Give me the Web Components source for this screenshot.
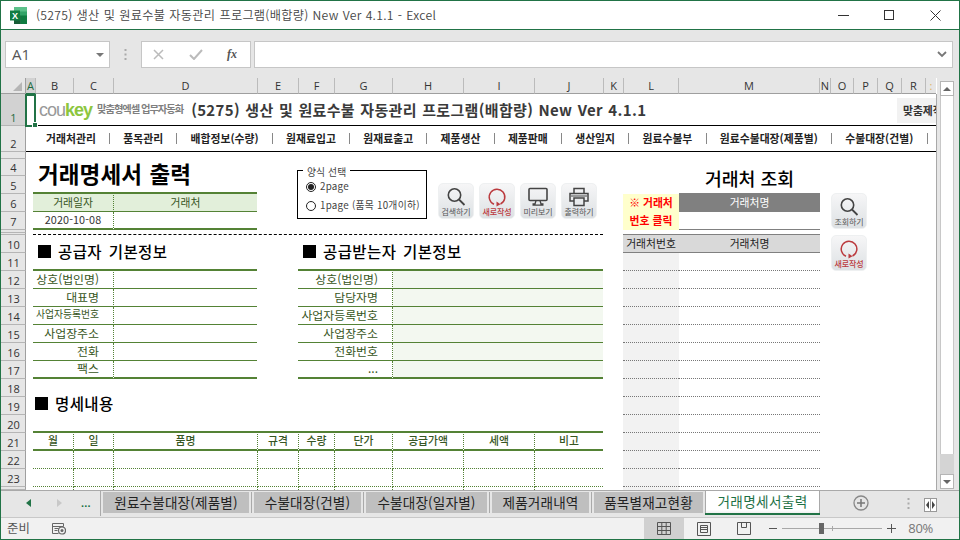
<!DOCTYPE html>
<html lang="ko"><head><meta charset="utf-8"><title>Excel</title>
<style>
html,body{margin:0;padding:0;width:960px;height:540px;overflow:hidden;background:#e6e6e6}
body{font-family:"Noto Sans CJK KR","Noto Sans",sans-serif;}
</style></head><body>
<x-app></x-app>
<script>
const K='"Noto Sans CJK KR",sans-serif';
const def=(n,css,html,init)=>customElements.define(n,class extends HTMLElement{
  connectedCallback(){ if(this.shadowRoot)return; const r=this.attachShadow({mode:'open'});
    r.innerHTML='<style>'+css+'</style>'+(typeof html==='function'?html(this):html); if(init)init(this,r);} });

const ICON={
 search:'<svg viewBox="0 0 24 20" width="24" height="20"><circle cx="10.5" cy="8" r="6.200" fill="none" stroke="#444" stroke-width="1.6"/><path d="M15 12.5 20.500 18" stroke="#444" stroke-width="1.8"/></svg>',
 refresh:'<svg viewBox="0 0 24 20" width="24" height="20"><path d="M9 17.2A7.8 7.8 0 1 1 15.5 17" fill="none" stroke="#bb3b3f" stroke-width="1.5"/><path d="M11.5 14.5 15.5 17.2 11.5 19.5z" fill="#bb3b3f"/></svg>',
 view:'<svg viewBox="0 0 24 20" width="24" height="20"><rect x="3" y="1.5" width="18" height="12" rx="1" fill="none" stroke="#444" stroke-width="1.6"/><path d="M10 13.5 9 17H6.500M14 13.500 15 17h2.500M6.500 18.200h11" fill="none" stroke="#444" stroke-width="1.300"/></svg>',
 print:'<svg viewBox="0 0 24 20" width="24" height="20"><path d="M7 6V1.500h10V6M6.500 14H3V6.500h18V14h-3.500M7 11h10v7.500H7z" fill="none" stroke="#444" stroke-width="1.500"/><path d="M4 9h16" stroke="#444" stroke-width="1"/></svg>'
};
def('x-sheet-btn',`:host{display:flex;flex-direction:column;align-items:center;width:36px;height:36px;box-sizing:border-box;padding-top:3px;border-radius:5px;border:1px solid #eef0f1;background:linear-gradient(#f6f6f7,#dde1e4);font:8px/9px ${K};color:#555;overflow:hidden}
 :host([red]){color:#bb3b3f;font-weight:500} svg{display:block;flex:none;margin-bottom:0} span{white-space:nowrap;letter-spacing:-.1px}`,
 h=>ICON[h.getAttribute('icon')]+`<span>${h.getAttribute('label')}</span>`);

def('x-title-bar',`:host{display:flex;align-items:center;height:30px;box-sizing:border-box;background:#fff;border-top:1px solid #217346;border-bottom:1px solid #217346;padding-left:9px;font:12.200px/1 ${K};color:#444}
 .t{margin-left:9px;flex:1;font-weight:350;white-space:nowrap;word-spacing:.4px;letter-spacing:.28px}
 .w{display:flex;height:100%;padding-right:1px} .w b{display:flex;width:46px;align-items:center;justify-content:center}`,
 `<svg width="17" height="17" viewBox="0 0 17 17"><path d="M4 0h13v17H4z" fill="#33a468"/><path d="M4 0h13v4.500H4z" fill="#5cc18a"/><path d="M10.500 8.500H17v8.500h-6.500z" fill="#107c41"/><path d="M4 8.500h6.500V17H4z" fill="#185c37"/><rect y="3.500" width="10" height="10" fill="#107c41"/><text x="5" y="11.800" text-anchor="middle" font-size="9" font-weight="700" fill="#fff" font-family="Liberation Sans">X</text></svg>
 <div class="t">(5275) 생산 및 원료수불 자동관리 프로그램(배합량) New Ver 4.1.1 - Excel</div>
 <div class="w"><b><svg width="11" height="11"><path d="M0 5.500h11" stroke="#333"/></svg></b><b><svg width="11" height="11"><rect x=".5" y=".5" width="9" height="9" fill="none" stroke="#333"/></svg></b><b><svg width="11" height="11"><path d="M.5.500l10 10M10.500.500l-10 10" stroke="#333"/></svg></b></div>`);

def('x-formula-bar',`:host{display:flex;align-items:center;height:48px;box-sizing:border-box;padding:11px 6px 10px 4px;background:#e6e6e6;font:14px/1 "Open Sans",sans-serif}
 .box{background:#fff;border:1px solid #c6c6c6;height:27px;box-sizing:border-box;display:flex;align-items:center;position:relative}
 .nm{width:105px;padding-left:6px;color:#555;font-size:15px;justify-content:space-between;padding-right:5px;box-sizing:border-box}
 .car{width:0;height:0;border:4px solid transparent;border-top:4px solid #777;border-bottom:0}
 .dots{width:31px;display:flex;justify-content:center}
 .fx{width:110px;padding:0 0 0 11px;color:#aaa;box-sizing:border-box}
 .in{flex:1;margin-left:3px;justify-content:flex-end;padding-right:5px}
 i{font:italic 700 12px "Liberation Serif",serif;color:#555;margin-left:24px}
 .ok{margin-left:25px}`,
 `<div class="box nm">A1<span class="car"></span></div><div class="dots"><svg width="3" height="13"><path d="M1.500 1v11" stroke="#aaa" stroke-width="2" stroke-dasharray="2 2.500"/></svg></div>
 <div class="box fx"><svg width="11" height="11"><path d="M1 1l9 9M10 1l-9 9" stroke="#bbb" stroke-width="1.500"/></svg><svg class="ok" width="14" height="11"><path d="M1 6l4 4 8-9" stroke="#bbb" stroke-width="2" fill="none"/></svg><i>fx</i></div>
 <div class="box in"><svg width="10" height="7"><path d="M1 1l4 4 4-4" stroke="#777" stroke-width="1.800" fill="none"/></svg></div>`);

def('x-menu-bar',`:host{display:flex;align-items:center;height:100%;box-sizing:border-box;padding-left:20px;font:700 10.800px/1 ${K};color:#222;letter-spacing:.05px;white-space:nowrap;overflow:hidden}
 span{flex:none} i{flex:none;width:1px;height:11px;background:#888;margin:0 13.180px}`,
 h=>['거래처관리','품목관리','배합정보(수량)','원재료입고','원재료출고','제품생산','제품판매','생산일지','원료수불부','원료수불대장(제품별)','수불대장(건별)'].map(t=>`<span>${t}</span><i></i>`).join(''));

def('x-logo',`:host{display:flex;align-items:center;padding-left:13px;white-space:nowrap;height:100%;box-sizing:border-box;color:#333}
 .c{font:400 18px/1 "Liberation Sans",sans-serif;letter-spacing:-1px;color:#999}.c b{color:#8dc63f}
 .s{font:700 10.300px/1 ${K};color:#7f7f7f;margin-left:5px;letter-spacing:-1.050px;}
 .t{font:700 15px/1 ${K};margin-left:8px;letter-spacing:.34px;word-spacing:.8px;color:#3a3a3a}`,
 `<span class="c">cou<b>key</b></span><span class="s">맞춤형엑셀 업무자동화</span><span class="t">(5275) 생산 및 원료수불 자동관리 프로그램(배합량) New Ver 4.1.1</span>`);

def('x-section',`:host{display:flex;align-items:center;height:100%;font:500 15.500px/1 ${K};color:#000;white-space:nowrap;letter-spacing:.4px;word-spacing:2px}
 b{display:block;width:13px;height:13px;background:#000;margin-right:7px;flex:none}`,
 `<b></b><slot></slot>`);

def('x-form-box',`:host{display:block;border:1px solid #000;box-sizing:border-box;height:49px;margin-top:11px;position:relative;font:9.800px/1 ${K};color:#444;white-space:nowrap;padding:9px 0 0 8px;background:#fff}
 .lg{position:absolute;left:5px;top:-3px;background:#fff;padding:0 4px;line-height:9px;letter-spacing:.1px}
 .r{display:flex;align-items:center;height:10px;margin-top:2px;margin-bottom:9px;letter-spacing:.25px} 
 .o{width:10px;height:10px;border:1px solid #222;border-radius:50%;box-sizing:border-box;margin-right:4px;flex:none;display:flex;align-items:center;justify-content:center;background:#fff}
 .o.c::after{content:"";width:6px;height:6px;border-radius:50%;background:#222}`,
 `<span class="lg">양식 선택</span><div class="r"><span class="o c"></span>2page</div><div class="r"><span class="o"></span>1page (품목 10개이하)</div>`);

const COLS=[25,10,38,40,144,41,36,58,71,71,69,20,55,141,11,23,24,24,24,10];
const HDRS=['A','B','C','D','E','F','G','H','I','J','K','L','M','N','O','P','Q','R',':'];
const RH=[32,26,7,17,18,18,18,3,2,18,18,18,18,18,18,18,18,18,18,18,18,18,18,3];
const G='#548235';
def('x-sheet',`
 :host{display:block;position:relative;width:936px;height:412px;background:#fff;overflow:hidden;box-sizing:content-box}
 .g{display:grid;grid-template-columns:${COLS.map(c=>c+'px').join(' ')};grid-template-rows:16px ${RH.map(r=>r+'px').join(' ')};font:10.800px/1 ${K};color:#333;white-space:nowrap;width:936px;height:412px}
 .ch{background:#e6e6e6;border-bottom:1px solid #9f9f9f;border-right:1px solid #bbb;box-sizing:border-box;display:flex;align-items:flex-end;justify-content:center;font:11px/14px "Open Sans",sans-serif;color:#333;overflow:hidden}
 .ch.s{background:#d2d2d2;color:#1e6b41;border-bottom:1px solid #217346}
 .corner{background:#e6e6e6;border-bottom:1px solid #9f9f9f;border-right:1px solid #9f9f9f;box-sizing:border-box;position:relative}
 .corner::after{content:"";position:absolute;right:3px;bottom:2px;border:0 solid transparent;border-width:0 0 9px 9px;border-bottom-color:#b5b5b5}
 .rh{background:#e6e6e6;border-bottom:1px solid #b5b5b5;border-right:1px solid #9f9f9f;box-sizing:border-box;display:flex;align-items:flex-end;justify-content:center;font:11px/15px "Open Sans",sans-serif;color:#333;overflow:hidden;padding-left:1px}
 .rh.s{background:#d2d2d2;color:#1e6b41;border-right:1px solid #217346}
 .c{box-sizing:border-box;display:flex;align-items:center;justify-content:center;min-width:0;min-height:0;padding-bottom:1px}
 .lb{justify-content:flex-end;padding-right:14px;padding-bottom:2px;color:#375623;font-size:11.900px}
 .tiny{font-size:9.800px}
 .h{color:#375623;background:#e2efda} .hh{color:#375623;font-weight:500}
 .dr{border-right:1px dotted ${G}}
 .tl{border-top:2px solid ${G};margin-top:-2px} .bt{border-bottom:1px solid ${G}} .bT{border-bottom:2px solid ${G}} .bd{border-bottom:1px dotted ${G}}
 .ml3{margin-left:-3px}.ml1{margin-left:-1px}.mr1{margin-right:1px}
 .sel{position:absolute;left:24px;top:16px;width:11px;height:33px;box-sizing:border-box;border:2px solid #217346;pointer-events:none}
 .sel::after{content:"";position:absolute;right:-4px;bottom:-3px;width:4px;height:4px;background:#217346;border:1px solid #fff}
 .dash{border-bottom:1px dashed #000;align-self:end;height:0}
 .mk{display:flex;align-items:center;justify-content:center;background:#f2f2f2;font:700 10.800px/1 ${K};color:#333;height:25px;overflow:hidden;align-self:center}
 .rt{font:500 18.300px/1 ${K};color:#000;padding-top:3px;padding-bottom:0}
 .big{font:700 22.500px/1 ${K};color:#000;justify-content:flex-start;padding-left:2px;letter-spacing:.1px;word-spacing:1px}
 .y{background:#ffc;color:#f00;font-weight:700}
 .gy{background:#808080;color:#fff;margin-top:-1px}
 .sb{background:#d9d9d9;color:#222;border-top:1px solid #808080;border-bottom:1px solid #808080;margin-top:-1px}
 .gd{border-bottom:1px dotted #777}
 .l{background:#f2f2f2}
 .tint{background:#f3f8f0}
 .wrap{display:flex;flex-direction:column;gap:6px}
 .edge{position:absolute;right:0;top:16px;bottom:0;width:1px;background:#a9a9a9}
`,h=>{
 let o='';
 const cell=(r,c,re,ce,cl,t='',st='')=>{o+=`<div class="${cl}" style="grid-area:${r+1}/${c+1}/${re+1}/${ce+1};${st}">${t}</div>`;};
 o+=`<div class="corner" style="grid-area:1/1"></div>`;
 HDRS.forEach((t,i)=>o+=`<div class="ch ${i==0?'s':''}" style="grid-area:1/${i+2};${i==18?'color:#e0b060;border-right:0':''}">${t}</div>`);
 RH.forEach((_,i)=>{o+=`<div class="rh ${i==0?'s':''}" style="grid-area:${i+2}/1">${[2,7,8,23].includes(i)?'':i+1}</div>`});
 const C={A:1,B:2,C:3,D:4,E:5,F:6,G:7,H:8,I:9,J:10,K:11,L:12,M:13,N:14,T:19};
 const rc=(r1,c1,r2,c2,cl,t,st)=>cell(r1,C[c1],r2+1,C[c2]+1,cl,t,st);
 rc(1,'B',1,'T','',`<x-logo></x-logo>`,'border-bottom:1px solid #000;box-sizing:border-box;display:block;margin-left:-10px');
 rc(2,'A',2,'T','',`<x-menu-bar></x-menu-bar>`,'border-bottom:1px solid #000;box-sizing:border-box;display:block');
 rc(4,'B',5,'D','c big','거래명세서 출력','height:27px;margin-top:1px');
 rc(6,'B',6,'C','c h tl bt dr ml3','거래일자');rc(6,'D',6,'D','c h tl bt mr1','거래처');
 rc(7,'B',7,'C','c bT dr ml3','2020-10-08','letter-spacing:.1px');rc(7,'D',7,'D','c bT mr1');
 rc(8,'B',9,'J','dash ml3 mr1','','');
 rc(10,'B',11,'D','',`<x-section>공급자 기본정보</x-section>`,'margin-left:2px;padding-bottom:3px;box-sizing:border-box');
 rc(10,'F',11,'I','',`<x-section>공급받는자 기본정보</x-section>`,'margin-left:4px;padding-bottom:3px;box-sizing:border-box');
 const L=['상호(법인명)','대표명','사업자등록번호','사업장주소','전화','팩스'],Rr=['상호(법인명)','담당자명','사업자등록번호','사업장주소','전화번호','...'];
 for(let i=0;i<6;i++){
   const b=i==5?'bT':'bt',t=i==0?'tl':'',r=12+i;
   rc(r,'B',r,'C',`c lb dr ml3 ${b} ${t} ${i==2?'tiny':''}`,L[i]);rc(r,'D',r,'D',`c mr1 ${b} ${t}`);
   rc(r,'F',r,'G',`c lb dr ml1 ${b} ${t}`,Rr[i]);rc(r,'H',r,'J',`c tint mr1 ${b} ${t}`);
 }
 rc(18,'B',20,'D','',`<x-section>명세내용</x-section>`,'margin-left:-1px;padding-bottom:5px;box-sizing:border-box');
 const IT=[['B','B','월'],['C','C','일'],['D','D','품명'],['E','E','규격'],['F','F','수량'],['G','G','단가'],['H','H','공급가액'],['I','I','세액'],['J','J','비고']];
 IT.forEach(([a,b,t],i)=>{
   const d=(i<8?'dr':'mr1')+(i==0?' ml3':'');
   rc(21,a,21,b,`c hh tl bT ${d}`,t);
   rc(22,a,22,b,`c bd ${d}`);rc(23,a,23,b,`c bd ${d}`);rc(24,a,24,b,`c ${d}`);
 });
 rc(4,'M',5,'M','c rt','거래처 조회');
 rc(6,'L',6,'L','c y ml1','※ 거래처');rc(6,'M',6,'M','c gy','거래처명');
 rc(7,'L',7,'L','c y ml1','번호 클릭');rc(7,'M',7,'M','c','','border-bottom:1px solid #808080');
 rc(10,'L',10,'L','c sb ml1','거래처번호');rc(10,'M',10,'M','c sb','거래처명');
 for(let r=11;r<=23;r++){rc(r,'L',r,'L','c l gd ml1');rc(r,'M',r,'M','c gd');}
 rc(24,'L',24,'L','c l ml1');
 cell(4,6,9,8,'','<x-form-box></x-form-box>','margin-left:-2px;width:130px');
 o+=`<div style="grid-area:6/9/10/12;display:flex;gap:5px;margin:7px 0 0 45px;align-self:start"><x-sheet-btn icon="search" label="검색하기"></x-sheet-btn><x-sheet-btn icon="refresh" label="새로작성" red></x-sheet-btn><x-sheet-btn icon="view" label="미리보기"></x-sheet-btn><x-sheet-btn icon="print" label="출력하기"></x-sheet-btn></div>`;
 o+=`<div class="wrap" style="grid-area:7/15/16/19;margin:-1px 0 0 11px;align-self:start;width:37px"><x-sheet-btn icon="search" label="조회하기"></x-sheet-btn><x-sheet-btn icon="refresh" label="새로작성" red></x-sheet-btn></div>`;
 o+=`<div class="mk" style="grid-area:2/19/3/21;margin-left:-5px;justify-content:flex-start;padding-left:6px;">맞춤제작</div>`;
 return `<div class="g">${o}</div><div class="sel"></div><div class="edge"></div>`;
});

def('x-scrollbar',`:host{display:flex;flex-direction:column;width:14px;height:412px;box-sizing:border-box;margin:0 0 0 3px;padding:3px 0 1px}
 .a,.b{background:#fff;border:1px solid #b5b5b5;height:15px;box-sizing:border-box;display:flex;align-items:center;justify-content:center;flex:none}
 .t{flex:1;background:#fff;border:solid #c8c8c8;border-width:0 1px;}
 .k{height:20px;flex:none;background:#d4d4d4}
 i{width:0;height:0;border:4px solid transparent}.a i{border-bottom:4px solid #666;border-top:0}.b i{border-top:4px solid #666;border-bottom:0}`,
 `<div class="a"><i></i></div><div class="t"></div><div class="k"></div><div class="b"><i></i></div>`);

def('x-tabs',`:host{display:flex;align-items:flex-start;height:27px;box-sizing:border-box;background:#e6e6e6;border-top:1px solid #a9a9a9;padding:0;font:13.600px/1 ${K};color:#333;position:relative}
 .nav{display:flex;align-items:center;width:100px;height:25px;flex:none;border-right:1px solid #aaa;box-sizing:border-box;position:relative}
 .nav i{position:absolute;top:8px;width:0;height:0;border:4px solid transparent}
 .dots{position:absolute;left:80px;top:7px;font:700 11px/1 "Liberation Sans";color:#217346;letter-spacing:.2px}
 .t{height:21px;margin-top:1px;background:#bfbfbf;display:flex;align-items:center;justify-content:center;box-sizing:border-box;white-space:nowrap;letter-spacing:.15px;color:#222;flex:none;margin-left:2px}
 .s{width:1px;height:21px;background:#aaa;margin:1px 0 0 2px;flex:none}
 .a{height:25px;margin:-1px 0 0 0;background:#fff;color:#1e7145;border:solid #a9a9a9;border-width:1px 1px 0 1px;width:115px;box-sizing:border-box;display:flex;flex-direction:column;flex:none;letter-spacing:.35px}
 .a span{flex:1;display:flex;align-items:center;justify-content:center;white-space:nowrap;background:linear-gradient(#fff 85%,#f0f0f0)}
 .a::after{content:"";height:2px;background:#217346;margin:0 -1px}
 .plus{position:absolute;left:852px;top:4px}.d{position:absolute;left:906px;top:7px}.sp{position:absolute;left:923px;top:7px}`,
 `<div class="nav"><i style="left:25px;border-right:5px solid #217346;border-left:0"></i><i style="left:56px;border-left:5px solid #c8c8c8;border-right:0"></i><span class="dots">...</span></div>
 <div class="t" style="width:146px">원료수불대장(제품별)</div><div class="s"></div>
 <div class="t" style="width:107px">수불대장(건별)</div><div class="s"></div>
 <div class="t" style="width:121px">수불대장(일자별)</div><div class="s"></div>
 <div class="t" style="width:97px">제품거래내역</div><div class="s"></div>
 <div class="t" style="width:109px">품목별재고현황</div><div class="a" style="margin-left:2px"><span>거래명세서출력</span></div>
 <svg class="plus" width="16" height="16"><circle cx="8" cy="8" r="7" fill="none" stroke="#888" stroke-width="1.300"/><path d="M8 4v8M4 8h8" stroke="#777" stroke-width="1.500"/></svg>
 <svg class="d" width="3" height="11"><path d="M1.500 0v11" stroke="#aaa" stroke-width="2" stroke-dasharray="2 2.500"/></svg>
 <svg class="sp" width="13" height="14"><rect x=".5" y=".5" width="12" height="13" fill="#fff" stroke="#999"/><path d="M5 3v8l-3-4zM8 3v8l3-4z" fill="#444"/><path d="M6.500 0v14" stroke="#999"/></svg>`);

def('x-status',`:host{display:flex;align-items:center;height:22px;box-sizing:border-box;background:#f1f1f1;border-top:1px solid #c8c8c8;font:12.400px/1 ${K};color:#555}
 .t{margin-left:6px;width:45px;letter-spacing:.2px}
 .sp{flex:1}
 .v{display:flex;width:40px;height:100%;align-items:center;justify-content:center}
 .on{background:#d0d0d0}
 .z{position:relative;width:100px;height:1px;background:#a8a8a8;margin:0 5px}
 .z b{position:absolute;left:37px;top:-5px;width:5px;height:11px;background:#666}.z i{position:absolute;left:50px;top:-2px;width:1px;height:5px;background:#a8a8a8}
 .p{font:13px/1 "Open Sans",sans-serif;color:#777;letter-spacing:-.3px;margin:0 26px 0 12px;}`,
 `<span class="t">준비</span>
 <svg width="14" height="13"><path d="M.5 1.500h11M.5 1.500v10h6M.5 4.500h11M11.500 1.500v3M2.500 6.500h4M2.500 8.500h3" stroke="#666" fill="none"/><circle cx="10" cy="8.500" r="3.500" fill="none" stroke="#666" stroke-width="1.200"/><circle cx="10" cy="8.500" r="1.500" fill="#666"/></svg>
 <span class="sp"></span>
 <span class="v on"><svg width="14" height="13"><path d="M.5.500h13v12H.5zM.5 4.500h13M.5 8.500h13M4.800.500v12M9.200.500v12" fill="none" stroke="#555"/></svg></span>
 <span class="v"><svg width="14" height="14"><path d="M.5.500h13v13H.5zM3.500 3.500h7v7h-7zM3.500 5.500h7M3.500 7.500h7" fill="none" stroke="#555"/></svg></span>
 <span class="v"><svg width="14" height="13"><path d="M.5.500h13v12H.5zM4.500.500v5h5v-5" fill="none" stroke="#555"/></svg></span>
 <svg width="8" height="3" style="margin-left:5px"><path d="M0 1.500h8" stroke="#555"/></svg>
 <span class="z"><b></b><i></i></span>
 <svg width="9" height="9"><path d="M0 4.500h9M4.500 0v9" stroke="#555"/></svg>
 <span class="p">80%</span>`);

def('x-app',`:host{display:block;width:960px;height:540px;box-sizing:border-box;border:solid #217346;border-width:0 1px 1px 1px;background:#e6e6e6;overflow:hidden}
 .m{display:flex;height:412px}`,
 `<x-title-bar></x-title-bar><x-formula-bar></x-formula-bar><div class="m"><x-sheet></x-sheet><x-scrollbar></x-scrollbar></div><x-tabs></x-tabs><x-status></x-status>`);
</script>
</body></html>
